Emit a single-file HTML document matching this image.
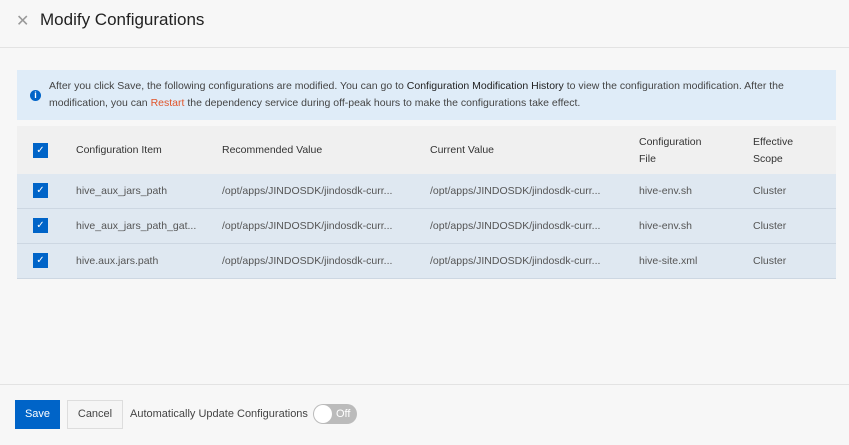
<!DOCTYPE html>
<html><head><style>
body{margin:0;width:849px;height:445px;background:#f7f7f7;font-family:"Liberation Sans",sans-serif;font-size:12px;color:#333;position:relative;overflow:hidden}
.hd{position:absolute;left:0;top:0;width:849px;height:47px;border-bottom:1px solid #e3e3e3}
.x{position:absolute;left:16px;top:11px;font-size:16px;color:#999}
.t{position:absolute;left:40px;top:10px;font-size:17px;color:#222}
.info{position:absolute;left:17px;top:70px;width:819px;height:50px;background:#dfecf8;font-size:10.5px;line-height:17px;color:#444}
.info p{margin:0;position:absolute;left:32px;top:8px;width:775px}
.ic{position:absolute;left:13px;top:20px;width:11px;height:11px;border-radius:50%;background:#0064c8;color:#fff;font-size:9px;text-align:center;line-height:11px;font-weight:bold}
b{font-weight:normal;color:#222}
.r{color:#e0542a}
.row{position:absolute;left:17px;width:819px;background:#dfe8f1;border-bottom:1px solid #cdd7e2;height:34px}
.th{background:#f0f0f0;height:48px;top:126px;border:none}
.c{position:absolute;top:0;line-height:34px;font-size:10.5px;color:#555}
.th .c{color:#333;line-height:48px}
.cb{position:absolute;left:16px;width:15px;height:15px;background:#0064c8;color:#fff;font-size:10px;text-align:center;line-height:15px}
.btn{position:absolute;top:400px;height:29px;line-height:29px;font-size:11px;text-align:center}
</style></head><body>
<div class="hd"><span class="x">✕</span><span class="t">Modify Configurations</span></div>
<div class="info"><div class="ic">i</div><p>After you click Save, the following configurations are modified. You can go to <b>Configuration Modification History</b> to view the configuration modification. After the modification, you can <span class="r">Restart</span> the dependency service during off-peak hours to make the configurations take effect.</p></div>
<div class="row th"><div class="cb" style="top:17px">✓</div>
<div class="c" style="left:59px">Configuration Item</div><div class="c" style="left:205px">Recommended Value</div><div class="c" style="left:413px">Current Value</div>
<div class="c" style="left:622px;line-height:17px;top:8px">Configuration<br>File</div><div class="c" style="left:736px;line-height:17px;top:8px">Effective<br>Scope</div></div>
<div class="row" style="top:174px"><div class="cb" style="top:9px">✓</div><div class="c" style="left:59px">hive_aux_jars_path</div><div class="c" style="left:205px">/opt/apps/JINDOSDK/jindosdk-curr...</div><div class="c" style="left:413px">/opt/apps/JINDOSDK/jindosdk-curr...</div><div class="c" style="left:622px">hive-env.sh</div><div class="c" style="left:736px">Cluster</div></div>
<div class="row" style="top:209px"><div class="cb" style="top:9px">✓</div><div class="c" style="left:59px">hive_aux_jars_path_gat...</div><div class="c" style="left:205px">/opt/apps/JINDOSDK/jindosdk-curr...</div><div class="c" style="left:413px">/opt/apps/JINDOSDK/jindosdk-curr...</div><div class="c" style="left:622px">hive-env.sh</div><div class="c" style="left:736px">Cluster</div></div>
<div class="row" style="top:244px"><div class="cb" style="top:9px">✓</div><div class="c" style="left:59px">hive.aux.jars.path</div><div class="c" style="left:205px">/opt/apps/JINDOSDK/jindosdk-curr...</div><div class="c" style="left:413px">/opt/apps/JINDOSDK/jindosdk-curr...</div><div class="c" style="left:622px">hive-site.xml</div><div class="c" style="left:736px">Cluster</div></div>
<div style="position:absolute;left:0;top:384px;width:849px;border-top:1px solid #e3e3e3"></div>
<div class="btn" style="left:15px;width:45px;background:#0064c8;color:#fff">Save</div>
<div class="btn" style="left:67px;width:54px;border:1px solid #ddd;height:27px;line-height:27px;background:#f5f5f5;color:#444">Cancel</div>
<div style="position:absolute;left:130px;top:408px;font-size:11px;color:#444">Automatically Update Configurations</div>
<div style="position:absolute;left:313px;top:404px;width:44px;height:20px;border-radius:10px;background:#bbb"><div style="position:absolute;left:1px;top:1px;width:18px;height:18px;border-radius:50%;background:#fff"></div><span style="position:absolute;left:23px;top:4px;color:#fff;font-size:11px">Off</span></div>
</body></html>
